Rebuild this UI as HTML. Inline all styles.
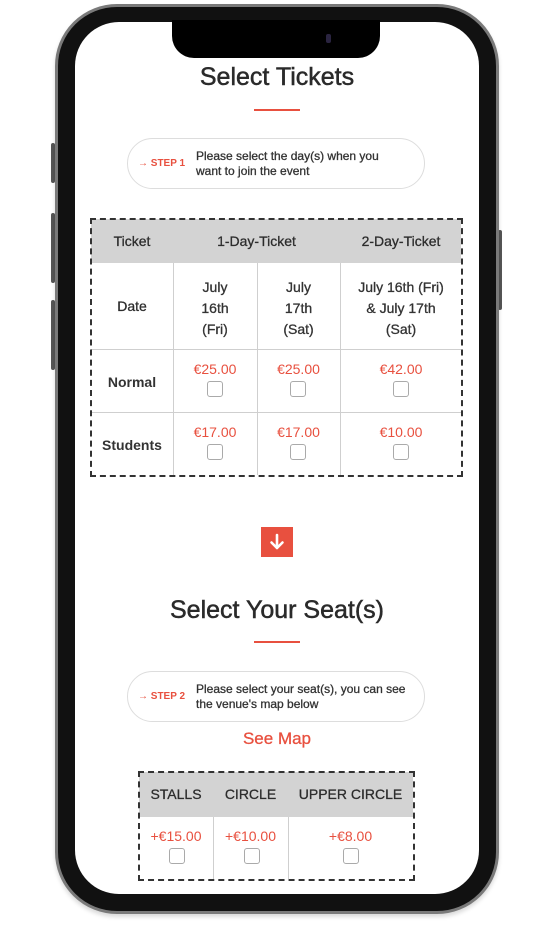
<!DOCTYPE html>
<html><head><meta charset="utf-8"><style>
*{margin:0;padding:0;box-sizing:border-box}
body{width:554px;height:928px;background:#fff;position:relative;overflow:hidden;font-family:"Liberation Sans",sans-serif;color:#333}
.a{position:absolute}
.frame{left:55px;top:4px;width:444px;height:910px;border-radius:62px;background:#111;border:3px solid #7a7a7a;box-shadow:0 3px 4px rgba(0,0,0,.15)}
.screen{left:75px;top:22px;width:404px;height:872px;border-radius:44px;background:#fff;overflow:hidden}
.notch{left:172px;top:20px;width:208px;height:38px;background:#000;border-radius:0 0 22px 22px}
.btn{background:#555;width:4px;border-radius:2px}
.c{text-align:center}
.title{font-size:25px;color:#2a2a2a;width:554px;left:0;-webkit-text-stroke:0.5px #2a2a2a}
.ul{height:2px;background:#e8503f;width:46px;left:254px}
.pill{border:1.5px solid #ddd;border-radius:26px;background:#fff}
.step{color:#e8503f;font-size:10px;font-weight:bold}
.pt{font-size:12px;line-height:15px;color:#333;-webkit-text-stroke:0.3px #333}
.tbl{border:2px dashed #333}
.hd{background:#d3d3d3}
.vl{width:1px;background:#cfcfcf}
.hl{height:1px;background:#cfcfcf}
.t{font-size:14px;color:#333;text-align:center;-webkit-text-stroke:0.3px #333}
.r{font-size:14px;color:#e8503f;text-align:center}
.cb{width:16px;height:16px;border:1.5px solid #aaa;border-radius:3px;background:#fff}
.dk{color:#2a2a2a}
</style></head><body>
<div class="a btn" style="left:51px;top:143px;height:40px"></div>
<div class="a btn" style="left:51px;top:213px;height:70px"></div>
<div class="a btn" style="left:51px;top:300px;height:70px"></div>
<div class="a btn" style="left:498px;top:230px;height:80px"></div>
<div class="a frame"></div>
<div class="a screen"></div>
<div class="a notch"></div>
<div class="a" style="left:326px;top:34px;width:5px;height:9px;border-radius:2px;background:#2a2440"></div>

<div class="a title c" style="top:63px">Select Tickets</div>
<div class="a ul" style="top:109px"></div>
<div class="a pill" style="left:127px;top:138px;width:298px;height:51px"></div>
<div class="a step" style="left:138px;top:158px">&#8594; STEP 1</div>
<div class="a pt" style="left:196px;top:149px">Please select the day(s) when you<br>want to join the event</div>

<div class="a hd" style="left:91px;top:219px;width:370px;height:44px"></div>
<div class="a vl" style="left:173px;top:263px;height:212px"></div>
<div class="a vl" style="left:257px;top:263px;height:212px"></div>
<div class="a vl" style="left:340px;top:263px;height:212px"></div>
<div class="a hl" style="left:91px;top:349px;width:370px"></div>
<div class="a hl" style="left:91px;top:412px;width:370px"></div>
<div class="a tbl" style="left:90px;top:218px;width:373px;height:259px"></div>
<div class="a t dk" style="left:91px;top:233px;width:82px">Ticket</div>
<div class="a t dk" style="left:173px;top:233px;width:167px">1-Day-Ticket</div>
<div class="a t dk" style="left:340px;top:233px;width:122px">2-Day-Ticket</div>
<div class="a t dk" style="left:91px;top:298px;width:82px">Date</div>
<div class="a t" style="left:173px;top:277px;width:84px;line-height:21px">July<br>16th<br>(Fri)</div>
<div class="a t" style="left:257px;top:277px;width:83px;line-height:21px">July<br>17th<br>(Sat)</div>
<div class="a t" style="left:340px;top:277px;width:122px;line-height:21px">July 16th (Fri)<br>&amp; July 17th<br>(Sat)</div>
<div class="a t" style="left:91px;top:374px;width:82px;font-weight:bold;-webkit-text-stroke:0">Normal</div>
<div class="a t" style="left:91px;top:437px;width:82px;font-weight:bold;-webkit-text-stroke:0">Students</div>
<div class="a r" style="left:173px;top:361px;width:84px">€25.00</div>
<div class="a r" style="left:257px;top:361px;width:83px">€25.00</div>
<div class="a r" style="left:340px;top:361px;width:122px">€42.00</div>
<div class="a r" style="left:173px;top:424px;width:84px">€17.00</div>
<div class="a r" style="left:257px;top:424px;width:83px">€17.00</div>
<div class="a r" style="left:340px;top:424px;width:122px">€10.00</div>
<div class="a cb" style="left:207px;top:381px"></div>
<div class="a cb" style="left:290px;top:381px"></div>
<div class="a cb" style="left:393px;top:381px"></div>
<div class="a cb" style="left:207px;top:444px"></div>
<div class="a cb" style="left:290px;top:444px"></div>
<div class="a cb" style="left:393px;top:444px"></div>

<div class="a" style="left:261px;top:527px;width:32px;height:30px;background:#e8503f"></div>
<svg class="a" style="left:261px;top:527px" width="32" height="30" viewBox="0 0 32 30"><path d="M16 8v13M10.5 15.5L16 21l5.5-5.5" stroke="#fff" stroke-width="2.6" fill="none" stroke-linecap="round" stroke-linejoin="round"/></svg>

<div class="a title c" style="top:596px">Select Your Seat(s)</div>
<div class="a ul" style="top:641px"></div>
<div class="a pill" style="left:127px;top:671px;width:298px;height:51px"></div>
<div class="a step" style="left:138px;top:691px">&#8594; STEP 2</div>
<div class="a pt" style="left:196px;top:682px">Please select your seat(s), you can see<br>the venue's map below</div>
<div class="a c" style="left:0;width:554px;top:729px;font-size:17px;color:#e8503f;-webkit-text-stroke:0.3px #e8503f">See Map</div>

<div class="a hd" style="left:139px;top:772px;width:274px;height:45px"></div>
<div class="a vl" style="left:213px;top:817px;height:62px"></div>
<div class="a vl" style="left:288px;top:817px;height:62px"></div>
<div class="a tbl" style="left:138px;top:771px;width:277px;height:110px"></div>
<div class="a t dk" style="left:139px;top:786px;width:74px">STALLS</div>
<div class="a t dk" style="left:213px;top:786px;width:75px">CIRCLE</div>
<div class="a t dk" style="left:288px;top:786px;width:125px">UPPER CIRCLE</div>
<div class="a r" style="left:139px;top:828px;width:74px">+€15.00</div>
<div class="a r" style="left:213px;top:828px;width:75px">+€10.00</div>
<div class="a r" style="left:288px;top:828px;width:125px">+€8.00</div>
<div class="a cb" style="left:169px;top:848px"></div>
<div class="a cb" style="left:244px;top:848px"></div>
<div class="a cb" style="left:343px;top:848px"></div>
</body></html>
